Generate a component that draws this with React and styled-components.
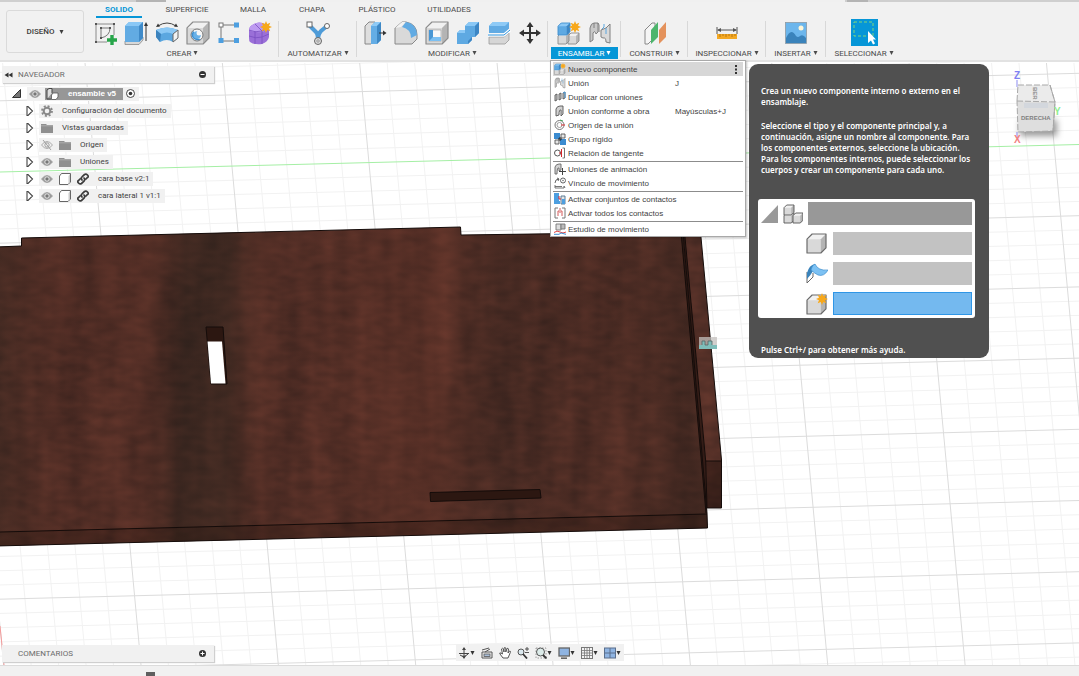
import React from "react";
import styled, { createGlobalStyle, css } from "styled-components";

const GlobalStyle = createGlobalStyle`
  * {
    box-sizing: border-box;
  }
  body {
    margin: 0;
    background: #f0f0f0;
    color: #4b4b4b;
    font-family: Roboto, "Liberation Sans", sans-serif;
    font-size: 8px;
  }
  button {
    font: inherit;
    color: inherit;
    background: none;
    border: none;
    padding: 0;
    margin: 0;
    cursor: pointer;
  }
  svg {
    display: block;
    flex: none;
  }
`;

/* ---------- shared drawings ---------- */

const Svg = ({ s = 24, w, h, box, children }) => (
  <svg
    width={w || s}
    height={h || s}
    viewBox={box || `0 0 ${w || s} ${h || s}`}
    fill="none"
    aria-hidden="true"
  >
    {children}
  </svg>
);

const Star = ({ x, y, r = 5 }) => {
  const pts = [];
  for (let i = 0; i < 16; i++) {
    const a = (Math.PI * i) / 8;
    const d = i % 2 ? r * 0.55 : r;
    pts.push(`${x + d * Math.sin(a)},${y - d * Math.cos(a)}`);
  }
  return <polygon points={pts.join(" ")} fill="#f7a81b" />;
};

// a bevelled cube, origin at its top left corner
const Cube = ({ x = 0, y = 0, s = 20, tone = "grey", line = "#6a6a6a" }) => {
  const c =
    tone === "blue"
      ? ["#5ea9e2", "#8cc8f5", "#3d86c4"]
      : ["#d9d9d9", "#f1f1f1", "#b4b4b4"];
  const d = s * 0.27;
  const e = s - d;
  return (
    <g transform={`translate(${x} ${y})`} strokeLinejoin="round">
      <path d={`M0 ${d}L${d} 0H${s}V${e}L${e} ${s}H0Z`} fill={c[0]} />
      <path d={`M0 ${d}L${d} 0H${s}L${e} ${d}Z`} fill={c[1]} />
      <path d={`M${e} ${d}L${s} 0V${e}L${e} ${s}Z`} fill={c[2]} />
      <path
        d={`M0 ${d}L${d} 0H${s}V${e}L${e} ${s}H0Z`}
        stroke={tone === "blue" ? "#3f8fce" : line}
        strokeWidth={s > 14 ? 1.2 : 0.9}
      />
    </g>
  );
};

const Caret = () => (
  <Svg w={5} h={4}>
    <path d="M.5 0H4.500L2.500 4Z" fill="currentColor" />
  </Svg>
);

/* ---------- ribbon icons ---------- */

const SketchIcon = () => (
  <Svg>
    <path d="M3 3H21V14M3 3V21H14" stroke="#8a8a8a" strokeWidth="1" />
    <path d="M8 17V7H17Q17 15 8 17Z" stroke="#777" strokeWidth="1" />
    <path d="M2 2h2v2h-2zM20 2h2v2h-2zM2 20h2v2h-2zM7 6h2v2h-2zM16 6h2v2h-2zM7 16h2v2h-2z" fill="#555" />
    <path d="M19 14V24M14 19H24" stroke="#27a54a" strokeWidth="3.400" />
  </Svg>
);

const ExtrudeIcon = () => (
  <Svg>
    <path d="M1 20V23.500H15L19 19V16Z" fill="#d8d8d8" stroke="#888" strokeWidth=".8" />
    <path d="M1 5L5 1H19V17L15 21H1Z" fill="#62abe3" />
    <path d="M1 5L5 1H19L15 5Z" fill="#8ac8f6" />
    <path d="M15 5L19 1V17L15 21Z" fill="#3f8ac8" />
    <path d="M22 20V3" stroke="#333" strokeWidth="1" />
    <path d="M20 5L22 1L24 5Z" fill="#333" />
  </Svg>
);

const RevolveIcon = () => (
  <Svg>
    <path d="M1 9Q12 4 23 9V17L18 21Q12 17 5 21L1 16Z" fill="#5ba7e0" />
    <path d="M1 9Q12 4 23 9L18 13Q12 10 6 13Z" fill="#8bc8f5" />
    <path d="M1 9L6 13L5 21L1 16Z" fill="#3c83bd" />
    <path d="M18 13L23 9V17L18 21Z" fill="#f2f2f2" stroke="#666" strokeWidth="1" />
    <path d="M3 5Q12 -1 21 5" stroke="#444" strokeWidth="1" />
    <path d="M1 6L3 2.500L5 5.500ZM23 6L21 2.500L19 5.500Z" fill="#333" />
  </Svg>
);

const HoleIcon = () => (
  <Svg>
    <Cube x={1} y={1} s={22} line="#8a8a8a" />
    <circle cx="11" cy="14" r="6" fill="#f6f6f6" stroke="#777" />
    <path d="M5.500 13A6 6 0 0 0 15 18Q8 18 8 10Q6 11 5.500 13Z" fill="#3f8fce" />
    <circle cx="11" cy="14" r="3.800" fill="#68b1e8" />
    <circle cx="13" cy="12" r="2.500" fill="#f6f6f6" />
  </Svg>
);

const PatternIcon = () => (
  <Svg>
    <path d="M4 4H20M4 4V20H20" stroke="#777" />
    <rect x="2" y="2" width="4" height="4" fill="#fff" stroke="#777" />
    <path d="M17 1.500h5v5h-5zM1.500 17h5v5h-5zM17 17h5v5h-5z" fill="#4d9fe0" />
  </Svg>
);

const FormIcon = () => (
  <Svg>
    <path d="M1 9Q1 5 6 3Q11 0 17 3Q21 5 21 9V16Q20 21 14 23Q6 24 2 21Q1 20 1 17Z" fill="#9a6fd8" />
    <path d="M1 9Q1 5 6 3Q11 0 17 3Q21 5 21 8L14 11Q6 12 1 9Z" fill="#bd9af0" />
    <path d="M1 9Q7 12 14 10L21 7M1 15Q8 18 14 16L21 13M7 10V23M14 10V23M7 3L14 10" stroke="#7a4fc0" strokeWidth=".8" />
    <Star x={18} y={6} r={6} />
  </Svg>
);

const AutomateIcon = () => (
  <Svg>
    <path d="M3 4L10 11Q12 13 12 20Q12 13 15 10L21 5" stroke="#4f9cd8" strokeWidth="4" />
    <path d="M12 12L21 5" stroke="#4f9cd8" strokeWidth="2" />
    <rect x="1" y="1" width="5" height="5" fill="#fff" stroke="#666" />
    <circle cx="21" cy="5" r="2.500" fill="#fff" stroke="#666" />
    <circle cx="12" cy="20" r="3.500" fill="#ddd" stroke="#666" />
    <circle cx="12" cy="20" r="1.200" fill="#fff" stroke="#777" strokeWidth=".8" />
  </Svg>
);

const PressPullIcon = () => (
  <Svg>
    <path d="M2 5L6 1H12V19L8 23H2Z" fill="#dedede" stroke="#888" />
    <path d="M8 5L12 1H18V19L14 23H8Z" fill="#64ade5" />
    <path d="M8 5L12 1H18L14 5Z" fill="#8ecaf6" />
    <path d="M14 5L18 1V19L14 23Z" fill="#3e88c5" />
    <path d="M16 12H21" stroke="#333" />
    <path d="M20 9.500L23.500 12L20 14.500Z" fill="#333" />
  </Svg>
);

const FilletIcon = () => (
  <Svg>
    <path d="M1 7L8 1H12Q23 3 23 14V18L18 23H1Z" fill="#d9d9d9" stroke="#888" />
    <path d="M1 7L8 1H12L7 6Z" fill="#f2f2f2" />
    <path d="M8 6L12 1Q23 3 23 14L17 17Q17 8 8 6Z" fill="#62abe3" />
  </Svg>
);

const ShellIcon = () => (
  <Svg>
    <Cube x={1} y={1} s={22} line="#8a8a8a" />
    <rect x="4" y="9" width="12" height="11" fill="#f8f8f8" stroke="#999" strokeWidth=".6" />
    <path d="M4 9L8 9V16H16V20H4Z" fill="#4a97d4" />
    <path d="M4 20L8 16H16V20Z" fill="#7cc0f2" />
  </Svg>
);

const CombineIcon = () => (
  <Svg>
    <path d="M1 12L4 9H9V5L13 1H23V12L19 16H16V19L12 23H1Z" fill="#5ea9e2" />
    <path d="M9 5L13 1H23L19 5ZM1 12L4 9H9V12Z" fill="#8ac8f6" />
    <path d="M19 5L23 1V12L19 16ZM12 20L16 16V19L12 23Z" fill="#3d86c4" />
  </Svg>
);

const SplitIcon = () => (
  <Svg>
    <path d="M2 16H17L22 12V19L18 23H2Z" fill="#d6d6d6" stroke="#999" strokeWidth=".8" />
    <path d="M2 5L6 1H22V8L18 12H2Z" fill="#62abe3" />
    <path d="M2 5L6 1H22L18 5Z" fill="#8ecaf6" />
    <path d="M1 14H17L23 9" stroke="#fff" strokeWidth="3" />
    <path d="M1 14H17L23 9" stroke="#2f93dc" strokeWidth="1" />
  </Svg>
);

const MoveIcon = () => (
  <Svg>
    <path d="M12 3V21M3 12H21" stroke="#333" strokeWidth="2" />
    <path d="M12 1L15.500 6H8.500ZM12 23L15.500 18H8.500ZM1 12L6 8.500V15.500ZM23 12L18 8.500V15.500Z" fill="#333" />
  </Svg>
);

const NewComponentIcon = ({ s = 24 }) => (
  <Svg s={s} box="0 0 24 24">
    <Cube x={11} y={12} s={11} line="#8a8a8a" />
    <Cube x={1} y={12} s={11} line="#8a8a8a" />
    <Cube x={1} y={2} s={12} tone="blue" />
    <Star x={18} y={6} r={6} />
  </Svg>
);

const JointIcon = ({ s = 24 }) => (
  <Svg s={s} box="0 0 24 24">
    <path d="M2 21V7Q3 2 6 2H10V11L8 13Q7 9 5 12V19Z" fill="#c9c9c9" stroke="#808080" />
    <path d="M6 2V7M10 2L11 4V11" stroke="#808080" />
    <path d="M13 16V9L18 7L22 3V22L18 21Q18 16 15 17Z" fill="#d9d9d9" stroke="#808080" />
    <path d="M18 7V13M14 8L16 6V3" stroke="#5aa6df" />
  </Svg>
);

const PlaneIcon = () => (
  <Svg>
    <path d="M2 9L9 2H12V16L5 23H2Z" fill="#f5f5f5" stroke="#888" />
    <path d="M8 9L15 1V16L8 23Z" fill="#4db56c" />
    <path d="M16 9L23 1V16L16 23Z" fill="#e4925c" />
  </Svg>
);

const MeasureIcon = () => (
  <Svg>
    <path d="M2 6V13M22 6V13M3 9H21" stroke="#555" />
    <path d="M2 9L6 7V11ZM22 9L18 7V11Z" fill="#555" />
    <rect x="2" y="13" width="20" height="5" fill="#f3a823" />
    <path d="M5 13V16M8 13V15M11 13V16M14 13V15M17 13V16M20 13V15" stroke="#a8690b" strokeWidth=".8" />
  </Svg>
);

const PictureIcon = () => (
  <Svg>
    <rect x="1.500" y="1.500" width="21" height="21" fill="#6cb6ec" stroke="#8d99a3" strokeWidth=".8" />
    <circle cx="17" cy="7" r="2.500" fill="#fdf6d8" />
    <path d="M2 17Q7 6 12 15Q14 17 16 15Q19 13 22 17V22H2Z" fill="#3a83bb" />
  </Svg>
);

const SelectIcon = () => (
  <Svg s={27}>
    <rect width="27" height="27" fill="#0696d7" />
    <rect x="3" y="3" width="19" height="14" stroke="#7ed67c" strokeDasharray="3 2" />
    <path d="M17 12V24L20 21.500L22 25.500L24 24.500L22 20.500H25Z" fill="#fff" />
  </Svg>
);

/* ---------- ribbon ---------- */

const Page = styled.div`
  display: flex;
  flex-direction: column;
  min-height: 100vh;
  overflow: hidden;
`;

const TopStrip = styled.div`
  display: flex;
  justify-content: space-between;
  height: 2px;
`;

const StripPart = styled.span`
  width: ${(p) => p.$width};
  background: linear-gradient(to right, #cfcfcf ${(p) => p.$from}, #b4b4b4 ${(p) => p.$from}, #b4b4b4 ${(p) => p.$to}, #cfcfcf ${(p) => p.$to});
`;

const Ribbon = styled.header`
  display: flex;
  gap: 2px;
  height: 60px;
  padding: 0 6px;
  background: #f1f1f1;
  border-bottom: 2px solid #e2e2e2;
`;

const Workspace = styled.button`
  display: flex;
  align-items: center;
  justify-content: center;
  gap: 4px;
  width: 78px;
  height: 43px;
  margin-top: 8px;
  border: 1px solid #dadada;
  border-radius: 3px;
  font-weight: 500;
  color: #3c3c3c;
`;

const RibbonBody = styled.div`
  flex: 1;
  min-width: 0;
`;

const Tabs = styled.nav`
  display: flex;
  gap: 15px;
  height: 16px;
  padding-left: 10px;
`;

const Tab = styled.button`
  width: ${(p) => p.$width}px;
  height: 16px;
  white-space: nowrap;
  font-weight: ${(p) => (p.$active ? 700 : 400)};
  color: ${(p) => (p.$active ? "#0696d7" : "#4b4b4b")};
  border-bottom: 2px solid ${(p) => (p.$active ? "#0696d7" : "transparent")};
`;

const Groups = styled.div`
  display: flex;
  height: 42px;
`;

const Group = styled.section`
  position: relative;
  display: flex;
  flex-direction: column;
  align-items: center;
  width: ${(p) => p.$width}px;

  &:not(:last-child)::after {
    content: "";
    position: absolute;
    right: 0;
    top: 3px;
    height: 36px;
    border-right: 1px solid #d8d8d8;
  }
`;

const IconRow = styled.div`
  display: flex;
  align-items: center;
  justify-content: center;
  gap: 7px;
  height: 29px;
`;

const GroupLabel = styled.button`
  display: flex;
  align-items: center;
  gap: 2px;
  height: 12px;
  padding: 0 7px;
  white-space: nowrap;
  color: #4b4b4b;
  ${(p) =>
    p.$open &&
    css`
      background: #0696d7;
      color: #fff;
    `}
`;

const tabs = [
  ["SOLIDO", 46],
  ["SUPERFICIE", 60],
  ["MALLA", 42],
  ["CHAPA", 46],
  ["PLÁSTICO", 54],
  ["UTILIDADES", 60],
];

const groups = [
  { label: "CREAR", width: 193, icons: [SketchIcon, ExtrudeIcon, RevolveIcon, HoleIcon, PatternIcon, FormIcon] },
  { label: "AUTOMATIZAR", width: 78, icons: [AutomateIcon] },
  { label: "MODIFICAR", width: 191, icons: [PressPullIcon, FilletIcon, ShellIcon, CombineIcon, SplitIcon, MoveIcon] },
  { label: "ENSAMBLAR", width: 73, icons: [NewComponentIcon, JointIcon], open: true },
  { label: "CONSTRUIR", width: 67, icons: [PlaneIcon] },
  { label: "INSPECCIONAR", width: 78, icons: [MeasureIcon] },
  { label: "INSERTAR", width: 60, icons: [PictureIcon] },
  { label: "SELECCIONAR", width: 76, icons: [SelectIcon] },
];

/* ---------- assemble menu ---------- */

const Menu = styled.div`
  position: absolute;
  z-index: 3;
  top: 42px;
  left: 2px;
  width: 196px;
  padding: 1px 2px 0;
  background: #fff;
  border: 1px solid #a9a9a9;
  box-shadow: 1px 1px 2px rgba(0, 0, 0, 0.25);
  font-family: "Liberation Sans", sans-serif;
  color: #3f3f3f;
`;

const MenuItem = styled.button`
  display: grid;
  grid-template-columns: 12px 105px 1fr 6px;
  align-items: center;
  column-gap: 2px;
  width: 100%;
  height: 14px;
  padding: 0 4px 0 1px;
  text-align: left;
  white-space: nowrap;
  background: ${(p) => (p.$active ? "#d7d7d7" : "none")};
`;

const MenuLine = styled.hr`
  height: 1px;
  margin: 1px 0 0;
  border: none;
  background: #8c8c8c;
`;

const DuplicateIcon = () => (
  <Svg s={12}>
    <path d="M1 10V4L3 3V9ZM5 9V3L7 2V8ZM9 8V2L11 1V7Z" fill="#ccc" stroke="#555" strokeWidth=".9" />
    <path d="M9 2L11 1V7" stroke="#4f9cd8" />
  </Svg>
);
const AsBuiltIcon = () => (
  <Svg s={12}>
    <path d="M2 11V4Q3 1 6 1H9V9L7 11V5Q5 4 5 10Z" fill="#d2d2d2" stroke="#555" strokeWidth=".9" />
  </Svg>
);
const OriginIcon = () => (
  <Svg s={12}>
    <circle cx="5.500" cy="6" r="4.500" stroke="#666" strokeWidth=".9" />
    <circle cx="5.500" cy="6" r="2.500" stroke="#888" strokeWidth=".8" />
    <path d="M7 6H11" stroke="#d33" />
    <path d="M6 1L9 2" stroke="#49a35a" />
  </Svg>
);
const GroupIcon = () => (
  <Svg s={12}>
    <path d="M0 0h6v6h-6zM6 6h6v6h-6z" fill="#3b8bd0" />
    <path d="M7 1h4v4h-4zM1 7h4v4h-4z" fill="#e6e6e6" stroke="#555" strokeWidth=".9" />
    <path d="M4 6H8M6 4V8" stroke="#222" />
  </Svg>
);
const TangentIcon = () => (
  <Svg s={12}>
    <circle cx="3.500" cy="6" r="3" stroke="#555" />
    <path d="M8.500 1H10.500V11H8.500" stroke="#666" strokeWidth=".9" />
    <path d="M7.500 2V10M5 6H8" stroke="#d8262c" />
  </Svg>
);
const DriveIcon = () => (
  <Svg s={12}>
    <path d="M1 11V4Q2 1 5 1H7V7L5 8V5Q3 4 3 11Z" fill="#d2d2d2" stroke="#666" strokeWidth=".9" />
    <path d="M8.500 5V12M5 8.500H12" stroke="#444" />
  </Svg>
);
const LinkMotionIcon = () => (
  <Svg s={12}>
    <circle cx="9" cy="3.500" r="2.500" stroke="#555" strokeWidth=".9" />
    <circle cx="9" cy="3.500" r=".7" fill="#555" />
    <path d="M1 6Q1 2 5 2M3 1L5 2L4 4" stroke="#555" strokeWidth=".9" />
    <path d="M1 8V11H10V9L11 11M1 9.500H8" stroke="#666" strokeWidth=".9" />
  </Svg>
);
const ContactSetIcon = () => (
  <Svg s={12}>
    <path d="M0 0H5V8H6V11H0Z" fill="#4d9fe0" />
    <path d="M7 3H11V11H7Z" fill="#e5e5e5" stroke="#4d6f8c" strokeWidth=".9" />
    <path d="M8 6H11V11H8Z" fill="#4d9fe0" />
    <path d="M5 3V6H7" stroke="#d8262c" />
  </Svg>
);
const AllContactsIcon = () => (
  <Svg s={12}>
    <path d="M4 1H1V11H4M8 1H11V11H8" stroke="#777" />
    <path d="M4 9V4H5M8 9V4H7M6 1V6" stroke="#d45a5a" />
  </Svg>
);
const StudyIcon = () => (
  <Svg s={12}>
    <path d="M2 1H7V7H2Z" fill="#ddd" stroke="#777" strokeWidth=".9" />
    <path d="M7 1H11V6H7Z" fill="#bbb" stroke="#777" strokeWidth=".9" />
    <path d="M0 9.500Q3 7 6 9T12 9" stroke="#e04545" />
    <path d="M0 11.300H5L7 10L12 11.300" stroke="#3f8fd4" />
  </Svg>
);

const menuItems = [
  { icon: () => <NewComponentIcon s={12} />, label: "Nuevo componente", active: true },
  { icon: () => <JointIcon s={12} />, label: "Unión", keys: "J" },
  { icon: DuplicateIcon, label: "Duplicar con uniones" },
  { icon: AsBuiltIcon, label: "Unión conforme a obra", keys: "Mayúsculas+J" },
  { icon: OriginIcon, label: "Origen de la unión" },
  { icon: GroupIcon, label: "Grupo rígido" },
  { icon: TangentIcon, label: "Relación de tangente", line: true },
  { icon: DriveIcon, label: "Uniones de animación" },
  { icon: LinkMotionIcon, label: "Vínculo de movimiento", line: true },
  { icon: ContactSetIcon, label: "Activar conjuntos de contactos" },
  { icon: AllContactsIcon, label: "Activar todos los contactos", line: true },
  { icon: StudyIcon, label: "Estudio de movimiento" },
];

function AssembleMenu() {
  return (
    <Menu role="menu" aria-label="Ensamblar">
      {menuItems.map(({ icon: Icon, label, keys, active, line }) => (
        <React.Fragment key={label}>
          <MenuItem role="menuitem" $active={active}>
            <Icon />
            <span>{label}</span>
            <span>{keys}</span>
            {active && (
              <Svg w={6} h={9}>
                <path d="M2 0h2v2h-2zM2 3.500h2v2h-2zM2 7h2v2h-2z" fill="#333" />
              </Svg>
            )}
          </MenuItem>
          {line && <MenuLine />}
        </React.Fragment>
      ))}
    </Menu>
  );
}

/* ---------- tooltip ---------- */

const Tooltip = styled.aside`
  position: absolute;
  z-index: 2;
  left: 749px;
  top: 2px;
  width: 240px;
  padding: 21px 14px 3px 9px;
  border-radius: 9px;
  background: #505050;
  color: #fff;
  font-family: "Noto Sans", "Open Sans", sans-serif;
  font-weight: 600;
  line-height: 11px;

  p {
    margin: 0 0 13px;
    padding-left: 3px;
  }
  p:last-child {
    margin: 26px 0 0;
  }
`;

const Picture = styled.div`
  display: flex;
  flex-direction: column;
  gap: 7px;
  margin-top: 24px;
  padding: 3px;
  border-radius: 3px;
  background: #fff;
`;

const PictureRow = styled.div`
  display: flex;
  align-items: center;
  gap: 5px;
  height: 23px;
  padding-left: ${(p) => (p.$root ? 0 : 45)}px;
`;

const Bar = styled.span`
  flex: 1;
  height: 23px;
  background: ${(p) => p.$fill};
  border: 1px solid ${(p) => p.$edge || p.$fill};
`;

function HelpTooltip() {
  return (
    <Tooltip role="tooltip">
      <p>Crea un nuevo componente interno o externo en el ensamblaje.</p>
      <p>
        Seleccione el tipo y el componente principal y, a continuación, asigne
        un nombre al componente. Para los componentes externos, seleccione la
        ubicación. Para los componentes internos, puede seleccionar los cuerpos
        y crear un componente para cada uno.
      </p>
      <Picture>
        <PictureRow $root>
          <Svg w={17} h={18}>
            <path d="M17 0V18H0Z" fill="#999" />
          </Svg>
          <Svg s={20}>
            <Cube x={1} y={9} s={10} line="#555" />
            <Cube x={1} y={1} s={10} line="#555" />
            <Cube x={10} y={9} s={10} line="#555" />
          </Svg>
          <Bar $fill="#989898" />
        </PictureRow>
        <PictureRow>
          <Svg s={22}>
            <Cube x={1} y={1} s={19} />
          </Svg>
          <Bar $fill="#c2c2c2" />
        </PictureRow>
        <PictureRow>
          <Svg s={22}>
            <path d="M1 9V20L7 14V10" fill="#fff" stroke="#666" />
            <path d="M1 10Q3 2 9 1Q8 9 1 16Z" fill="#3a83bb" />
            <path d="M9 1Q12 8 22 7Q18 14 12 12Q8 10 5 7Q6 2 9 1Z" fill="#7cc1f3" stroke="#3f8fce" strokeWidth=".7" />
          </Svg>
          <Bar $fill="#c2c2c2" />
        </PictureRow>
        <PictureRow>
          <Svg s={22}>
            <Cube x={1} y={2} s={19} />
            <Star x={16} y={6} r={6} />
          </Svg>
          <Bar $fill="#74b9ef" $edge="#2f96e6" />
        </PictureRow>
      </Picture>
      <p>Pulse Ctrl+/ para obtener más ayuda.</p>
    </Tooltip>
  );
}

/* ---------- browser tree ---------- */

const Browser = styled.aside`
  position: absolute;
  left: 2px;
  top: 4px;
  width: 212px;
`;

const PanelHead = styled.div`
  display: flex;
  align-items: center;
  gap: 5px;
  height: 17px;
  padding: 0 8px 0 2px;
  background: #f1f1f1;
  box-shadow: 1px 1px 1px #cfcfcf;
  color: #6b6b6b;

  span {
    flex: 1;
  }
`;

const Tree = styled.ul`
  list-style: none;
  margin: 2px 0 0;
  padding: 0;
`;

const TreeRow = styled.li`
  display: flex;
  align-items: center;
  gap: ${(p) => (p.$root ? 6 : 4)}px;
  height: 17px;
  padding-left: ${(p) => (p.$root ? 10 : 23)}px;
`;

const TreeCell = styled.div`
  display: flex;
  align-items: center;
  gap: 6px;
  height: 14px;
  padding: 0 4px 0 2px;
  background: #f1f1f1;
  color: #3f3f3f;
  white-space: nowrap;

  span {
    padding-left: 3px;
  }
`;

const Selected = styled.div`
  display: flex;
  align-items: center;
  gap: 6px;
  height: 12px;
  margin: 0 -3px 0 -2px;
  padding: 0 7px 0 1px;
  background: #979797;
  color: #fff;
  font-family: "Liberation Sans", sans-serif;
  font-weight: 700;
`;

const Expander = () => (
  <Svg w={10} h={10}>
    <path d="M2 .5H3L7.500 5L3 9.500H2Z" stroke="#444" strokeWidth="1.100" fill="#fff" />
  </Svg>
);
const Eye = ({ off }) => (
  <Svg w={12} h={12}>
    <path
      d="M.5 6Q6 -1 11.500 6Q6 13 .5 6Z"
      fill={off ? "none" : "#999"}
      stroke="#999"
      strokeWidth=".8"
    />
    <circle cx="6" cy="6" r="2.200" fill={off ? "none" : "#777"} stroke={off ? "#999" : "#eee"} strokeWidth=".9" />
    {off && <path d="M2 1L10 11" stroke="#999" strokeWidth=".9" />}
  </Svg>
);
const Folder = () => (
  <Svg w={12} h={12}>
    <path d="M0 2H5L6 3H12V11H0Z" fill="#8f8f8f" />
    <path d="M0 3.800H12" stroke="#c4c4c4" strokeWidth=".6" />
  </Svg>
);
const Gear = () => (
  <Svg w={12} h={12}>
    <circle cx="6" cy="6" r="3.300" stroke="#888" strokeWidth="2" />
    <circle cx="6" cy="6" r="5" stroke="#888" strokeWidth="1.800" strokeDasharray="2 1.930" />
  </Svg>
);
const Body = () => (
  <Svg w={12} h={12}>
    <path d="M.5 3L2.500 .5H11.500V9L9 11.500H.5Z" fill="#fff" stroke="#666" />
    <path d="M9.500 3L11 1V9L9.500 10.500Z" fill="#ccc" />
  </Svg>
);
const Chain = () => (
  <Svg w={12} h={12}>
    <path
      d="M5 7Q3.500 5 5 3.800L7.500 1.500Q9 .5 10.500 2T10.500 4.500L9 6M7 5Q8.500 6.500 7 8.200L4.500 10.500Q3 11.500 1.500 10T1.500 7.500L3 6"
      stroke="#3c3c3c"
      strokeWidth="1.700"
      strokeLinecap="round"
    />
  </Svg>
);

const treeRows = [
  { label: "Configuración del documento", icons: [<Gear key="g" />] },
  { label: "Vistas guardadas", icons: [<Folder key="f" />] },
  { label: "Origen", icons: [<Eye key="e" off />, <Folder key="f" />] },
  { label: "Uniones", icons: [<Eye key="e" />, <Folder key="f" />] },
  { label: "cara base v2:1", icons: [<Eye key="e" />, <Body key="b" />, <Chain key="c" />] },
  { label: "cara lateral 1 v1:1", icons: [<Eye key="e" />, <Body key="b" />, <Chain key="c" />] },
];

function Navigator() {
  return (
    <Browser>
      <PanelHead>
        <Svg w={9} h={6}>
          <path d="M4.500 .5V5.500L.5 3ZM8.500 .5V5.500L4.500 3Z" fill="#333" />
        </Svg>
        <span>NAVEGADOR</span>
        <button aria-label="Contraer navegador">
          <Svg s={7}>
            <circle cx="3.500" cy="3.500" r="3.500" fill="#333" />
            <path d="M1.500 3.500H5.500" stroke="#fff" />
          </Svg>
        </button>
      </PanelHead>
      <Tree>
        <TreeRow $root>
          <button aria-label="Contraer ensamble v5">
            <Svg w={9} h={9}>
              <path d="M8.500 .5V8.500H.5Z" fill="#777" stroke="#333" />
            </Svg>
          </button>
          <TreeCell>
            <Eye />
            <Selected>
              <Svg w={13} h={12}>
                <path d="M1 11V2L3 .5H6V5M1 11H5" stroke="#444" fill="#ddd" />
                <path d="M5.500 7L7 5H12V9L10 11.500H5.500Z" fill="#fff" stroke="#555" strokeWidth=".8" />
              </Svg>
              <span>ensamble v5</span>
            </Selected>
            <Svg s={9}>
              <circle cx="4.500" cy="4.500" r="4" fill="#fff" stroke="#333" strokeWidth=".9" />
              <circle cx="4.500" cy="4.500" r="1.800" fill="#333" />
            </Svg>
          </TreeCell>
        </TreeRow>
        {treeRows.map((row) => (
          <TreeRow key={row.label}>
            <button aria-label={`Expandir ${row.label}`}>
              <Expander />
            </button>
            <TreeCell>
              {row.icons}
              <span>{row.label}</span>
            </TreeCell>
          </TreeRow>
        ))}
      </Tree>
    </Browser>
  );
}

/* ---------- 3D canvas ---------- */

const Viewport = styled.main`
  position: relative;
  flex: 1;
  min-height: 400px;
  background: #fff;

  > svg {
    position: absolute;
    inset: 0;
    width: 100%;
    height: 100%;
  }
`;

// ground grid: every fifth line is a major one
const rowsOf = (major) => {
  let d = "";
  for (let i = -8; i < 38; i++) {
    if ((i % 5 === 0) === major && i !== 0) {
      d += `M0 ${172 + i * 14.24}L1079 ${144.5 + i * 14.24}`;
    }
  }
  return d;
};
const colsOf = (major) => {
  let d = "";
  for (let i = -6; i < 40; i++) {
    if ((i % 5 === 0) === major) {
      d += `M${85 + i * 27.47} 63L${141 + i * 27.47} 665`;
    }
  }
  return d;
};

const plate =
  "M-4 247L21.500 246V238L460.500 227L461 235L683 232L707 513L707.500 528L-4 546Z";

function Scene() {
  return (
    <svg viewBox="0 62 1079 603" preserveAspectRatio="xMidYMid slice" fill="none">
      <defs>
        <filter id="wood" x="0" y="0" width="100%" height="100%" colorInterpolationFilters="sRGB">
          <feTurbulence type="fractalNoise" baseFrequency="0.03 0.004" numOctaves="3" seed="8" />
          <feColorMatrix values="1 0 0 0 0  1 0 0 0 0  1 0 0 0 0  0 0 0 0 1" result="streak" />
          <feTurbulence type="fractalNoise" baseFrequency="0.05 0.11" numOctaves="2" seed="3" />
          <feColorMatrix values="1 0 0 0 0  1 0 0 0 0  1 0 0 0 0  0 0 0 0 1" result="grain" />
          <feComposite in="streak" in2="grain" operator="arithmetic" k2="0.6" k3="0.4" />
          <feColorMatrix values=".32 0 0 0 .145  .15 0 0 0 .1  .11 0 0 0 .09  0 0 0 0 1" result="mix" />
          <feComposite in="mix" in2="SourceGraphic" operator="in" />
        </filter>
        <linearGradient id="bands" gradientUnits="userSpaceOnUse" x1="0" x2="707" y1="0" y2="12">
          <stop offset="0" stopColor="#2a241c" stopOpacity=".3" />
          <stop offset=".1" stopColor="#6a3226" stopOpacity=".15" />
          <stop offset=".2" stopColor="#6a3226" stopOpacity=".15" />
          <stop offset=".27" stopColor="#28221b" stopOpacity=".38" />
          <stop offset=".33" stopColor="#28221b" stopOpacity=".42" />
          <stop offset=".4" stopColor="#6a3226" stopOpacity=".12" />
          <stop offset=".62" stopColor="#74392b" stopOpacity=".3" />
          <stop offset=".72" stopColor="#2a1e18" stopOpacity=".2" />
          <stop offset=".85" stopColor="#5a3024" stopOpacity=".15" />
          <stop offset="1" stopColor="#2a1e18" stopOpacity=".35" />
        </linearGradient>
      </defs>
      <path d={colsOf(false) + rowsOf(false)} stroke="#f2f2f2" />
      <path d={colsOf(true) + rowsOf(true)} stroke="#dcdcdc" />
      <path d="M0 172L1079 144.500" stroke="#a5efa5" />
      <path d="M0 626L4 665" stroke="#f59a9a" />

      <path d="M683 232H700.500L721.500 460V508H706Z" fill="#000" filter="url(#wood)" />
      <path d="M705.700 461H721.500V508H707Z" fill="#120805" fillOpacity=".35" />
      <path d={plate} fill="#000" filter="url(#wood)" />
      <path d={plate} fill="url(#bands)" />
      <path d="M-4 532L707 514V528L-4 546Z" fill="#120805" fillOpacity=".2" />
      <path d="M681 232L706 513L707 508L705.500 461L684.500 232Z" fill="#1c0f0b" fillOpacity=".6" />
      <g stroke="#150c0a">
        <path d={plate} />
        <path d="M0 532L707 514M681 232L706 513M684.500 232L705.700 461L707 508H721.500V460L700.500 232M705.700 461H721.500" />
        <path d="M206 327H223L227 384H211Z" fill="#2c1711" />
        <path d="M430 492.500L540 489.500L541 498L430.500 501.500Z" fill="#2c1711" />
      </g>
      <path d="M207.500 341.500H222L225.500 383.500H211Z" fill="#fff" />

      <rect x="699" y="337" width="18" height="12" fill="#c4c0be" fillOpacity=".75" />
      <path d="M699 349V345H702V341H705V345H708V341H712V345H717V349Z" fill="#7fbdba" />
      <path d="M702 345V341H705V345H708V341H712V345" stroke="#566666" strokeWidth=".8" />
    </svg>
  );
}

const CubeBox = styled.div`
  position: absolute;
  top: 8px;
  right: 12px;
`;

const CubeText = styled.text`
  font-family: "Liberation Sans", sans-serif;
  font-weight: 700;
  font-size: ${(p) => (p.$axis ? 10 : 6)}px;
`;

function ViewCube() {
  return (
    <CubeBox>
      <svg width="60" height="80" viewBox="0 0 60 80" fill="none">
        <defs>
          <filter id="soft" x="-30%" y="-60%" width="160%" height="220%">
            <feGaussianBlur stdDeviation="3" />
          </filter>
        </defs>
        <path d="M13 50H50V66H13Z" fill="#000" fillOpacity=".4" filter="url(#soft)" />
        <path d="M10 17V10M10 62V68" stroke="#8b8bf0" />
        <path d="M10 31L48 32L46 61L11 62Z" fill="#dedede" />
        <path d="M10 31L11 15H43L48 32Z" fill="#ebebeb" />
        <path d="M43 15L48 32L46 61" stroke="#aaa" />
        <path d="M10 31L48 32L46 61L11 62ZM10 31L11 15H43L48 32" stroke="#a8a8a8" strokeDasharray="6 2" />
        <path d="M17 33H41V38H17Z" fill="#d3d7dd" />
        <CubeText x="14" y="50" fill="#808080">
          DERECHA
        </CubeText>
        <CubeText x="0" y="0" fill="#8e8e8e" transform="translate(26 17) rotate(90)">
          BER
        </CubeText>
        <CubeText $axis x="7" y="9" fill="#7f7ff2">
          Z
        </CubeText>
        <CubeText $axis x="47" y="45" fill="#90f090">
          Y
        </CubeText>
        <CubeText $axis x="7" y="73" fill="#f27f7f">
          X
        </CubeText>
      </svg>
    </CubeBox>
  );
}

/* ---------- bottom of the canvas ---------- */

const Comments = styled.div`
  position: absolute;
  left: 2px;
  bottom: 3px;
  width: 212px;

  ${PanelHead} {
    padding-left: 16px;
  }
`;

const NavBar = styled.div`
  position: absolute;
  bottom: 4px;
  left: 50%;
  transform: translateX(-50%);
  display: flex;
  align-items: center;
  gap: 6px;
  height: 17px;
  padding: 0 3px 0 2px;
  background: #f1f1f1;
  color: #333;
`;

const NavButton = styled.button`
  display: flex;
  align-items: center;
`;

const navTools = [
  {
    label: "Orbitar",
    drop: true,
    art: (
      <>
        <path d="M6 1V11M1 6.500H11M2 8Q6 11 10 7" stroke="#444" />
        <path d="M6 0L8 3H4ZM6 12L8 9H4Z" fill="#444" />
      </>
    ),
  },
  {
    label: "Mirar a",
    art: (
      <>
        <path d="M1 5H11V11H1ZM1 3L8 1M4 5L9 2" stroke="#555" />
        <rect x="3" y="7" width="6" height="2.500" fill="#a9bed8" stroke="#555" strokeWidth=".8" />
      </>
    ),
  },
  {
    label: "Encuadre",
    art: (
      <path
        d="M4 11L1 7Q0 5.500 2 6L3.500 7L2.500 2Q3.500 .5 4.300 2L5 5V1Q6 0 6.800 1V5L8 1.500Q9 .8 9.500 2L9 6L10.500 4Q12 4 11.300 5.500L9 11Z"
        fill="#fff"
        stroke="#444"
        strokeWidth=".9"
      />
    ),
  },
  {
    label: "Zoom",
    art: (
      <>
        <circle cx="4" cy="5" r="3" fill="#dbe8ee" stroke="#555" />
        <path d="M6 7L10 11.500" stroke="#333" strokeWidth="1.800" />
        <path d="M10 0V4M8 2H12M8 5.500H12" stroke="#444" strokeWidth=".9" />
      </>
    ),
  },
  {
    label: "Ajustar",
    drop: true,
    art: (
      <>
        <path d="M1 1H11V11H1Z" stroke="#888" strokeDasharray="1.500 1.500" strokeWidth=".8" />
        <circle cx="5.500" cy="5" r="4" fill="#dcebe9" stroke="#555" />
        <path d="M8 8L11.500 11.500" stroke="#333" strokeWidth="1.800" />
      </>
    ),
  },
  {
    label: "Visualización",
    drop: true,
    art: (
      <>
        <rect x="1" y="1" width="10.500" height="8" fill="#8fb4e2" stroke="#666" strokeWidth="1.300" />
        <path d="M3 11.200H9" stroke="#666" strokeWidth="1.600" />
      </>
    ),
  },
  {
    label: "Rejilla",
    drop: true,
    art: (
      <>
        <rect x=".5" y=".5" width="11" height="11" fill="#f4f4f4" stroke="#777" />
        <path d="M3.500 0V12M6 0V12M8.500 0V12M0 3.500H12M0 6H12M0 8.500H12" stroke="#777" strokeWidth=".8" />
      </>
    ),
  },
  {
    label: "Ventanas gráficas",
    drop: true,
    art: (
      <>
        <rect x=".5" y="1" width="11" height="10" fill="#8fb4e2" stroke="#5b6f8c" />
        <path d="M6 1V11M0 6H12" stroke="#5b6f8c" />
      </>
    ),
  },
];

const Timeline = styled.footer`
  display: flex;
  align-items: flex-end;
  height: 11px;
  padding-left: 146px;
  background: #f1f1f1;
  border-top: 1px solid #dcdcdc;

  span {
    width: 9px;
    height: 4px;
    background: #5f5f5f;
  }
`;

function App() {
  return (
    <Page>
      <GlobalStyle />
      <TopStrip>
        <StripPart $width="166px" $from="82%" $to="100%" />
        <StripPart $width="234px" $from="1%" $to="10%" />
      </TopStrip>
      <Ribbon>
        <Workspace>
          DISEÑO <Caret />
        </Workspace>
        <RibbonBody>
          <Tabs>
            {tabs.map(([name, width], i) => (
              <Tab key={name} $width={width} $active={i === 0}>
                {name}
              </Tab>
            ))}
          </Tabs>
          <Groups>
            {groups.map(({ label, width, icons, open }) => (
              <Group key={label} $width={width}>
                <IconRow>
                  {icons.map((Icon, i) => (
                    <button key={i} aria-label={`${label} ${i + 1}`}>
                      <Icon />
                    </button>
                  ))}
                </IconRow>
                <GroupLabel $open={open} aria-haspopup="menu">
                  {label} <Caret />
                </GroupLabel>
                {open && <AssembleMenu />}
              </Group>
            ))}
          </Groups>
        </RibbonBody>
      </Ribbon>
      <Viewport>
        <Scene />
        <Navigator />
        <HelpTooltip />
        <ViewCube />
        <Comments>
          <PanelHead>
            <span>COMENTARIOS</span>
            <button aria-label="Añadir comentario">
              <Svg s={7}>
                <circle cx="3.500" cy="3.500" r="3.500" fill="#333" />
                <path d="M1.500 3.500H5.500M3.500 1.500V5.500" stroke="#fff" />
              </Svg>
            </button>
          </PanelHead>
        </Comments>
        <NavBar>
          {navTools.map((tool) => (
            <NavButton key={tool.label} aria-label={tool.label}>
              <Svg s={12}>{tool.art}</Svg>
              {tool.drop && <Caret />}
            </NavButton>
          ))}
        </NavBar>
      </Viewport>
      <Timeline>
        <span />
      </Timeline>
    </Page>
  );
}

export default App;
